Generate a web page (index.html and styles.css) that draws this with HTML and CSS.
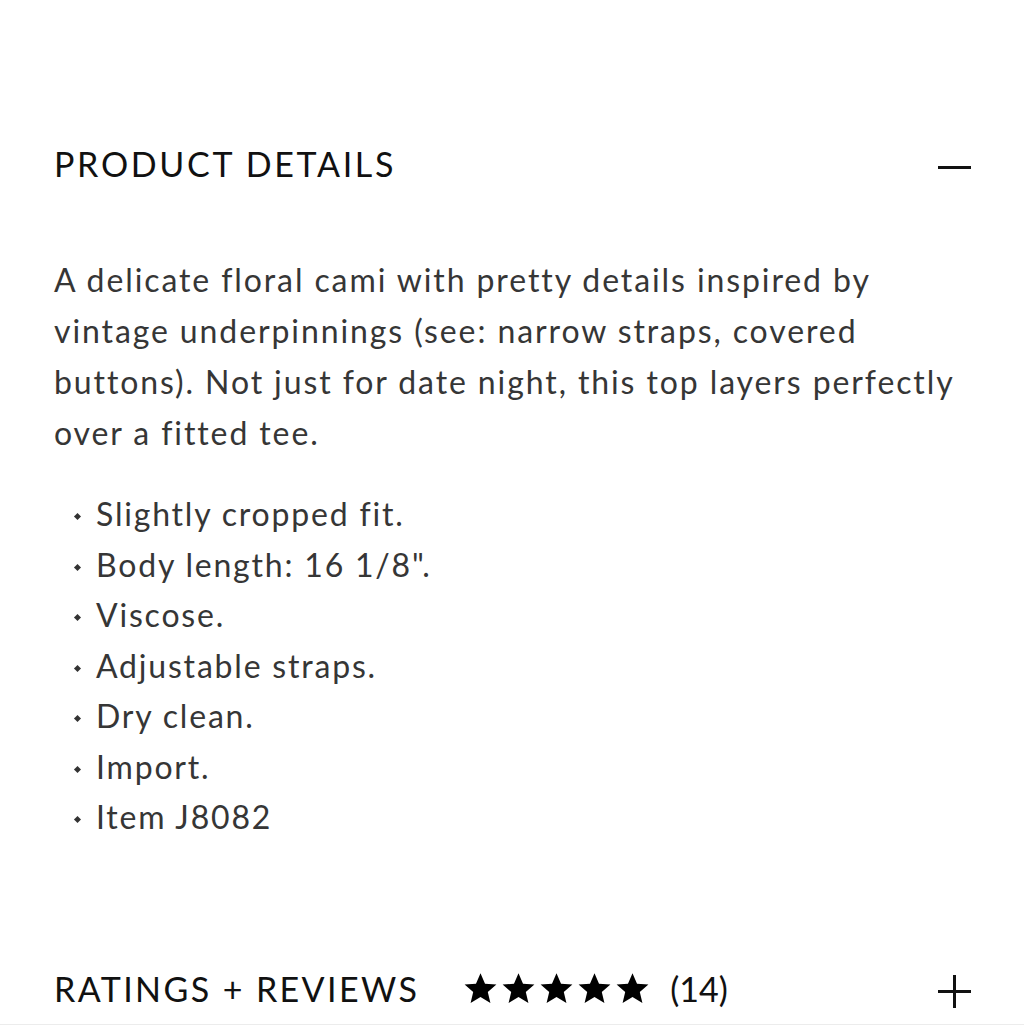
FILE: index.html
```html
<!DOCTYPE html>
<html>
<head>
<meta charset="utf-8">
<link rel="stylesheet" href="styles.css">
</head>
<body>
<div class="page">
  <section class="panel panel-open">
    <div class="panel-head">
      <h2 class="panel-title">PRODUCT DETAILS</h2>
      <span class="icon-minus"></span>
    </div>
    <p class="desc">A delicate floral cami with pretty details inspired by vintage underpinnings (see: narrow straps, covered buttons). Not just for date night, this top layers perfectly over a fitted tee.</p>
    <ul class="bullets">
      <li>Slightly cropped fit.</li>
      <li>Body length: 16 1/8".</li>
      <li>Viscose.</li>
      <li>Adjustable straps.</li>
      <li>Dry clean.</li>
      <li>Import.</li>
      <li>Item J8082</li>
    </ul>
  </section>
  <section class="panel panel-reviews">
    <div class="panel-head reviews-head">
      <h2 class="panel-title">RATINGS + REVIEWS</h2>
      <div class="stars">
        <svg class="star" viewBox="0 0 24 24"><path d="M12 1.5l3.1 7.2 7.8.6-5.9 5.1 1.8 7.6L12 17.9 5.2 22l1.8-7.6-5.9-5.1 7.8-.6z"/></svg>
        <svg class="star" viewBox="0 0 24 24"><path d="M12 1.5l3.1 7.2 7.8.6-5.9 5.1 1.8 7.6L12 17.9 5.2 22l1.8-7.6-5.9-5.1 7.8-.6z"/></svg>
        <svg class="star" viewBox="0 0 24 24"><path d="M12 1.5l3.1 7.2 7.8.6-5.9 5.1 1.8 7.6L12 17.9 5.2 22l1.8-7.6-5.9-5.1 7.8-.6z"/></svg>
        <svg class="star" viewBox="0 0 24 24"><path d="M12 1.5l3.1 7.2 7.8.6-5.9 5.1 1.8 7.6L12 17.9 5.2 22l1.8-7.6-5.9-5.1 7.8-.6z"/></svg>
        <svg class="star" viewBox="0 0 24 24"><path d="M12 1.5l3.1 7.2 7.8.6-5.9 5.1 1.8 7.6L12 17.9 5.2 22l1.8-7.6-5.9-5.1 7.8-.6z"/></svg>
        <span class="count">(14)</span>
      </div>
      <span class="icon-plus"></span>
    </div>
  </section>
</div>
</body>
</html>
```
FILE: styles.css
```css
html, body { margin: 0; padding: 0; background: #fff; }
body { font-family: "Lato", "Open Sans", sans-serif; color: #333; }
.panel { padding: 0 53px 0 54px; }
.panel-head { display: flex; align-items: center; justify-content: space-between; }
.panel-open { padding-top: 140px; }
.panel-open .panel-head { height: 48px; }
.panel-title { margin: 0; font-weight: 400; font-size: 34px; letter-spacing: 2.7px; color: #111; line-height: 1; }
.icon-minus { width: 33px; height: 3px; background: #111; margin-top: 6px; }
.desc { margin: 66px 0 0; font-size: 32px; letter-spacing: 1.9px; line-height: 51px; color: #363636; }
.bullets { list-style: none; margin: 31px 0 0; padding: 0; }
.bullets li { position: relative; padding-left: 42px; font-size: 32px; letter-spacing: 1.8px; line-height: 50.5px; color: #363636; }
.bullets li::before { content: ""; position: absolute; left: 21px; top: 25px; width: 5px; height: 5px; background: #333; transform: rotate(45deg); }
.panel-reviews { margin-top: 114px; padding-bottom: 3px; border-bottom: 1px solid #ececec; }
.reviews-head { height: 64px; }
.reviews-head .panel-title { flex: none; letter-spacing: 2.4px; }
.stars { display: flex; align-items: center; gap: 3px; margin-left: 44px; flex: 1; }
.star { width: 35px; height: 35px; fill: #000; }
.count { font-size: 34px; margin-left: 17px; color: #111; }
.icon-plus { position: relative; width: 33px; height: 33px; margin-top: 6px; }
.icon-plus::before, .icon-plus::after { content: ""; position: absolute; background: #111; }
.icon-plus::before { left: 0; right: 0; top: 15px; height: 3px; }
.icon-plus::after { top: 0; bottom: 0; left: 15px; width: 3px; }
```
